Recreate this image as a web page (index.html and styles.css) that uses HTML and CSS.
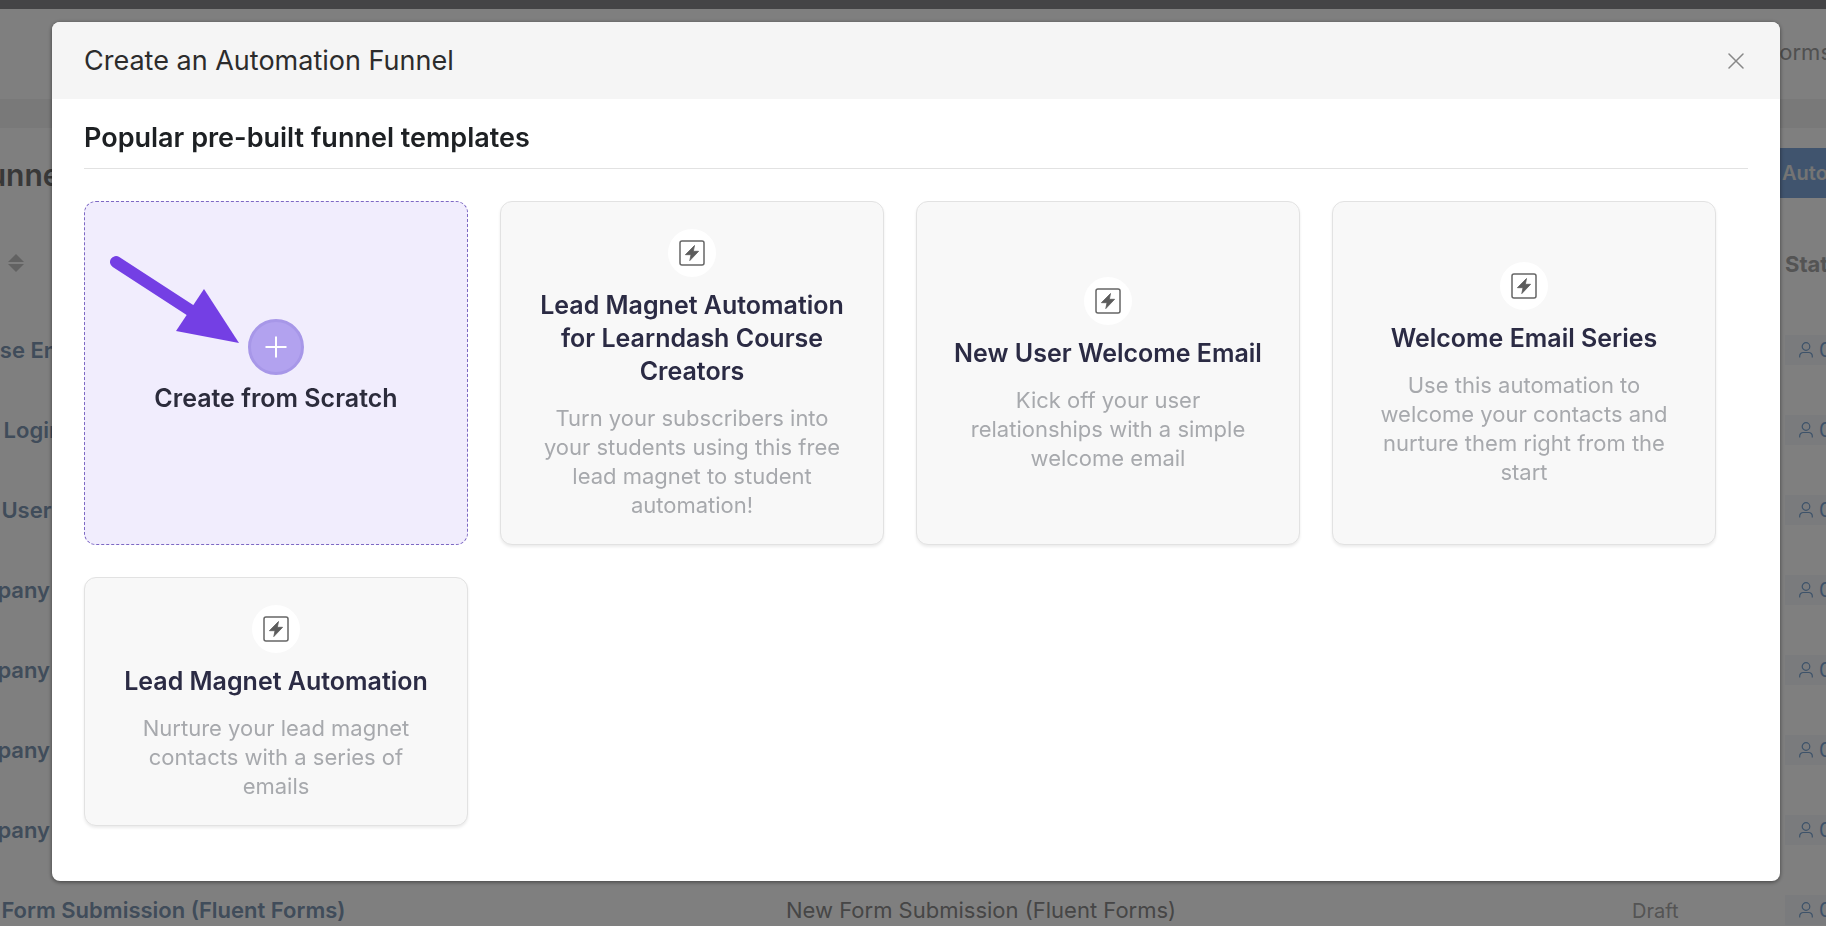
FILE: index.html
```html
<!DOCTYPE html>
<html lang="en">
<head>
<meta charset="utf-8">
<title>Create an Automation Funnel</title>
<link rel="stylesheet" href="styles.css">
</head>
<body>
<svg class="sprite" aria-hidden="true">
  <symbol id="bolt" viewBox="0 0 26 26">
    <rect x="1" y="1" width="24" height="24" rx="2" fill="none" stroke="#666" stroke-width="1.5"/>
    <path d="M15.500 5.500L14.300 11.300H19.600L10.800 20.600L12 14.700H6.400z" fill="#5c5c5c" stroke="#5c5c5c" stroke-width=".8" stroke-linejoin="round"/>
  </symbol>
  <symbol id="user" viewBox="0 0 14 16">
    <circle cx="7" cy="4.500" r="3.800" fill="none" stroke="currentColor" stroke-width="1.200"/>
    <path d="M.7 15.500v-1.500a3.500 3.500 0 0 1 3.500-3.500h5.600a3.500 3.500 0 0 1 3.500 3.500v1.500" fill="none" stroke="currentColor" stroke-width="1.200"/>
  </symbol>
</svg>

<div class="page" aria-hidden="true">
  <div class="adminbar"></div>
  <div class="topnav"><span>Forms</span></div>
  <div class="band"></div>
  <div class="page-head"><h1>All Funnels</h1><button class="new-btn" type="button" tabindex="-1">Automation</button></div>
  <table class="list">
    <thead><tr><th class="c-title"><span class="sort"><svg width="16" height="18" viewBox="0 0 16 18"><path d="M8 0l8 8H0zM8 18l8-8H0z" fill="currentColor"/></svg></span></th><th class="c-trigger"></th><th class="c-status"></th><th class="c-stats">Stats</th></tr></thead>
    <tbody>
      <tr><td><a href="#">Course Enrolled</a></td><td></td><td></td><td><span class="chip"><svg width="14" height="16"><use href="#user"/></svg>0</span></td></tr>
      <tr><td><a href="#">User Login</a></td><td></td><td></td><td><span class="chip"><svg width="14" height="16"><use href="#user"/></svg>0</span></td></tr>
      <tr><td><a href="#">New User</a></td><td></td><td></td><td><span class="chip"><svg width="14" height="16"><use href="#user"/></svg>0</span></td></tr>
      <tr><td><a href="#">Company</a></td><td></td><td></td><td><span class="chip"><svg width="14" height="16"><use href="#user"/></svg>0</span></td></tr>
      <tr><td><a href="#">Company</a></td><td></td><td></td><td><span class="chip"><svg width="14" height="16"><use href="#user"/></svg>0</span></td></tr>
      <tr><td><a href="#">Company</a></td><td></td><td></td><td><span class="chip"><svg width="14" height="16"><use href="#user"/></svg>0</span></td></tr>
      <tr><td><a href="#">Company</a></td><td></td><td></td><td><span class="chip"><svg width="14" height="16"><use href="#user"/></svg>0</span></td></tr>
      <tr><td><a href="#">New Form Submission (Fluent Forms)</a></td><td>New Form Submission (Fluent Forms)</td><td><span class="draft">Draft</span></td><td><span class="chip"><svg width="14" height="16"><use href="#user"/></svg>0</span></td></tr>
    </tbody>
  </table>
</div>

<div class="overlay">
  <section class="dialog" role="dialog" aria-modal="true" aria-labelledby="dlg-title">
    <header class="dialog-head">
      <h2 id="dlg-title">Create an Automation Funnel</h2>
      <button class="close" type="button" aria-label="Close"><svg width="16" height="16" viewBox="0 0 16 16"><path d="M1 1l14 14M15 1L1 15" stroke="currentColor" stroke-width="1.500" stroke-linecap="round"/></svg></button>
    </header>
    <div class="dialog-body">
      <h3 class="section-title">Popular pre-built funnel templates</h3>
      <div class="cards">
        <button class="card scratch" type="button">
          <svg class="arrow" width="132" height="92" viewBox="0 0 132 92" aria-hidden="true"><path d="M7 7L84 57" stroke="#743fe4" stroke-width="12" stroke-linecap="round"/><path d="M95 34L130 88L67 76z" fill="#743fe4"/></svg>
          <span class="plus"><svg width="22" height="22" viewBox="0 0 22 22"><path d="M11 .5v21M.5 11h21" stroke="#fff" stroke-width="2"/></svg></span>
          <span class="name">Create from Scratch</span>
        </button>
        <button class="card" type="button">
          <span class="badge"><svg width="26" height="26"><use href="#bolt"/></svg></span>
          <span class="name">Lead Magnet Automation for Learndash Course Creators</span>
          <span class="desc">Turn your subscribers into your students using this free lead magnet to student automation!</span>
        </button>
        <button class="card" type="button">
          <span class="badge"><svg width="26" height="26"><use href="#bolt"/></svg></span>
          <span class="name">New User Welcome Email</span>
          <span class="desc">Kick off your user relationships with a simple welcome email</span>
        </button>
        <button class="card" type="button">
          <span class="badge"><svg width="26" height="26"><use href="#bolt"/></svg></span>
          <span class="name">Welcome Email Series</span>
          <span class="desc">Use this automation to welcome your contacts and nurture them right from the start</span>
        </button>
        <button class="card" type="button">
          <span class="badge"><svg width="26" height="26"><use href="#bolt"/></svg></span>
          <span class="name">Lead Magnet Automation</span>
          <span class="desc">Nurture your lead magnet contacts with a series of emails</span>
        </button>
      </div>
    </div>
  </section>
</div>
</body>
</html>
```
FILE: styles.css
```css
* { box-sizing: border-box; }
html, body { height: 100%; }
body { margin: 0; overflow: hidden; font-family: Inter, "Liberation Sans", sans-serif; font-size: 22px; color: #2c2c2c; background: #fff; }
button { font: inherit; color: inherit; border: 0; padding: 0; cursor: pointer; }
h1, h2, h3 { margin: 0; }
.sprite { position: absolute; width: 0; height: 0; }

/* Page behind the dialog */
.page { height: 100%; margin: 0 -60px 0 -52px; overflow: hidden; }
.adminbar { height: 9px; background: #88898c; }
.topnav { height: 90px; display: flex; justify-content: flex-end; align-items: center; padding: 0 54px 4px 0; color: #a0a0a0; }
.band { height: 29px; background: #f3f3f3; }
.page-head { display: flex; justify-content: space-between; align-items: center; height: 90px; }
.page-head h1 { margin-left: -22px; padding-top: 4px; font-size: 30px; font-weight: 600; color: #707070; }
.new-btn { height: 50px; width: 180px; padding-left: 76px; overflow: hidden; text-align: left; background: #80a8dc; color: #e8e8e8; font-size: 20px; font-weight: 600; }
.list { width: 100%; table-layout: fixed; border-collapse: collapse; }
.list th, .list td { height: 80px; padding: 0; text-align: left; vertical-align: middle; white-space: nowrap; color: #8c8c8c; }
.list th { height: 92px; font-weight: 700; color: #a8a8a8; }
.list a { color: #8098b4; font-weight: 600; text-decoration: none; }
.c-title { width: 838px; }
.c-trigger { width: 836px; }
.c-status { width: 163px; }
.sort { display: block; padding-left: 60px; color: #c4c4c4; }
.draft { font-size: 20px; color: #a8a8a8; padding-left: 10px; }
.chip { display: inline-flex; align-items: center; gap: 6px; height: 30px; padding: 0 14px; background: #f4f7fb; color: #7aa4d2; font-size: 20px; }

/* Dialog */
.overlay { position: fixed; inset: 0; padding: 22px 46px 0 52px; background: rgba(0, 0, 0, .5); }
.dialog { background: #fff; border-radius: 8px; overflow: hidden; box-shadow: 0 1px 4px rgba(0, 0, 0, .5); }
.dialog-head { display: flex; justify-content: space-between; align-items: center; height: 77px; padding: 0 36px 0 32px; background: #f5f5f5; }
.dialog-head h2 { font-size: 27px; line-height: 36px; font-weight: 400; }
.close { display: flex; padding: 0; background: none; color: #888; }
.dialog-body { padding: 20px 32px 55px; }
.section-title { padding-bottom: 11px; border-bottom: 1px solid #e2e2e2; font-size: 27px; line-height: 38px; font-weight: 600; color: #1d2023; }
.cards { display: grid; grid-template-columns: repeat(4, 1fr); gap: 32px; padding: 32px 32px 0 0; }
.card { position: relative; display: flex; flex-direction: column; align-items: center; justify-content: center; padding: 27px 32px 24px; border: 1px solid #e2e2e2; border-radius: 12px; background: #f8f8f8; text-align: center; box-shadow: 0 2px 3px rgba(0, 0, 0, .08); }
.badge { display: flex; align-items: center; justify-content: center; width: 48px; height: 48px; margin-bottom: 12px; border-radius: 50%; background: #fff; }
.name { font-size: 25px; line-height: 33px; font-weight: 600; color: #2b2b44; }
.desc { margin-top: 16px; font-size: 22px; line-height: 29px; color: #a7a9ad; }
.scratch { padding-bottom: 39px; border: 1px dashed #7d68c4; background: #f1edfd; box-shadow: none; }
.scratch .name { color: #2c2c3c; }
.plus { display: flex; align-items: center; justify-content: center; width: 56px; height: 56px; margin-bottom: 7px; border: 3px solid #a797e8; border-radius: 50%; background: #b2a2ef; }
.arrow { position: absolute; left: 24px; top: 53px; }
```
